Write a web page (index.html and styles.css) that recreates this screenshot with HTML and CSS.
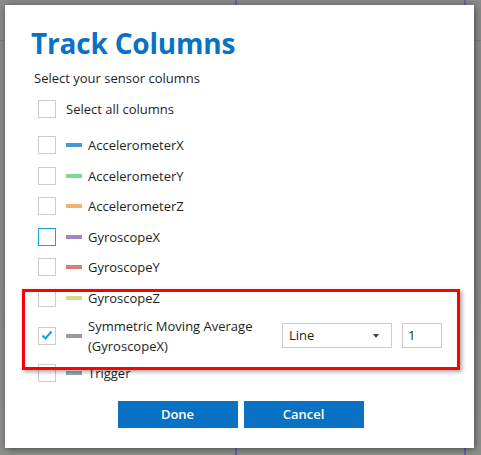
FILE: index.html
```html
<!DOCTYPE html>
<html>
<head>
<meta charset="utf-8">
<link rel="stylesheet" href="styles.css">
</head>
<body>
<div class="backdrop">
  <span class="bg-line v1"></span>
  <span class="bg-line v2"></span>
  <span class="bg-line h1"></span>
</div>
<div class="dialog">
  <h1 class="title">Track Columns</h1>
  <p class="subtitle">Select your sensor columns</p>
  <div class="all-row">
    <span class="check"></span>
    <span class="label">Select all columns</span>
  </div>
  <div class="list">
    <div class="row"><span class="check"></span><span class="swatch c-ax"></span><span class="label">AccelerometerX</span></div>
    <div class="row"><span class="check"></span><span class="swatch c-ay"></span><span class="label">AccelerometerY</span></div>
    <div class="row"><span class="check"></span><span class="swatch c-az"></span><span class="label">AccelerometerZ</span></div>
    <div class="row"><span class="check focus"></span><span class="swatch c-gx"></span><span class="label">GyroscopeX</span></div>
    <div class="row"><span class="check"></span><span class="swatch c-gy"></span><span class="label">GyroscopeY</span></div>
    <div class="row"><span class="check"></span><span class="swatch c-gz"></span><span class="label">GyroscopeZ</span></div>
    <div class="row tall">
      <span class="check checked"><svg viewBox="0 0 18 18" width="18" height="18"><path d="M4.5 9.5 L7.5 12.5 L13.5 5.5" fill="none" stroke="#1ba1e2" stroke-width="2.2"/></svg></span>
      <span class="swatch c-sma"></span>
      <span class="label two">Symmetric Moving Average<br>(GyroscopeX)</span>
      <span class="select">Line<span class="caret"></span></span>
      <span class="num">1</span>
    </div>
    <div class="row"><span class="check"></span><span class="swatch c-tr"></span><span class="label">Trigger</span></div>
  </div>
  <div class="buttons">
    <button class="btn">Done</button>
    <button class="btn">Cancel</button>
  </div>
  <div class="highlight"></div>
</div>
</body>
</html>
```

FILE: styles.css
```css
html, body {
  margin: 0;
  padding: 0;
}
body {
  width: 481px;
  height: 455px;
  background: #8a8a8a;
  position: relative;
  overflow: hidden;
  font-family: "Open Sans", "Noto Sans", sans-serif;
  color: #1e1e1e;
}
.backdrop {
  position: absolute;
  inset: 0;
  background: linear-gradient(#8b8b8b 0, #8b8b8b 60%, #8d918c 100%);
}
.bg-line {
  position: absolute;
  background: #6a62a8;
}
.v1 { left: 235px; top: 0; width: 2px; height: 455px; }
.v2 { left: 464px; top: 0; width: 2px; height: 455px; }
.h1 { left: 0; top: 40px; width: 481px; height: 1px; background: #7c7c84; }

.dialog {
  position: absolute;
  left: 5px;
  top: 5px;
  width: 469px;
  height: 443px;
  background: #ffffff;
  box-shadow: 1px 1px 7px rgba(0,0,0,0.5);
  box-sizing: border-box;
  padding: 0 0 0 26px;
}
.title {
  margin: 0;
  padding-top: 19px;
  font-size: 28px;
  line-height: 38px;
  font-weight: 700;
  color: #0a72c4;
  letter-spacing: -0.2px;
}
.subtitle {
  margin: 7px 0 0 3px;
  font-size: 13px;
  line-height: 18px;
}
.all-row {
  display: flex;
  align-items: center;
  height: 18px;
  margin: 13px 0 0 7px;
}
.all-row .check { margin-right: 10px; }
.list {
  margin: 12px 0 0 7px;
}
.row {
  display: flex;
  align-items: center;
  height: 30.5px;
}
.row.tall { height: 45px; }
.check {
  width: 18px;
  height: 18px;
  box-sizing: border-box;
  border: 1.5px solid #cccccc;
  background: #fff;
  flex: none;
  display: block;
}
.check.focus { border-color: #1ba1e2; }
.check.checked svg { display: block; margin: -1.5px; }
.swatch {
  width: 16px;
  height: 4px;
  margin: 0 6px 0 10px;
  flex: none;
}
.c-ax { background: #4a95d8; }
.c-ay { background: #80d98a; }
.c-az { background: #f5b06a; }
.c-gx { background: #9d86c4; }
.c-gy { background: #dd7a76; }
.c-gz { background: #d6db8a; }
.c-sma { background: #9a9a9a; }
.c-tr { background: #8fa7b7; }
.label {
  font-size: 13px;
  line-height: 18px;
  white-space: nowrap;
}
.label.two { line-height: 20px; width: 194px; }
.select {
  position: relative;
  width: 110px;
  height: 25px;
  box-sizing: border-box;
  border: 1px solid #cccccc;
  font-size: 13px;
  line-height: 23px;
  padding-left: 6px;
}
.caret {
  position: absolute;
  right: 12px;
  top: 10px;
  width: 0;
  height: 0;
  border-left: 3px solid transparent;
  border-right: 3px solid transparent;
  border-top: 4px solid #444;
}
.num {
  width: 40px;
  height: 25px;
  box-sizing: border-box;
  border: 1px solid #cccccc;
  font-size: 13px;
  line-height: 23px;
  padding-left: 5px;
  margin-left: 10px;
}
.buttons {
  display: flex;
  justify-content: center;
  gap: 6px;
  margin: 12px 0 0 -24px;
}
.btn {
  width: 120px;
  height: 27px;
  border: none;
  background: #0a72c4;
  color: #fff;
  font-family: "Open Sans", "Noto Sans", sans-serif;
  font-size: 13px;
  font-weight: 600;
  padding: 0;
}
.highlight {
  position: absolute;
  left: 17px;
  top: 284px;
  width: 438px;
  height: 81px;
  box-sizing: border-box;
  border: 3px solid #ff0000;
  box-shadow: 2px 2px 4px rgba(0,0,0,0.35);
}
```
